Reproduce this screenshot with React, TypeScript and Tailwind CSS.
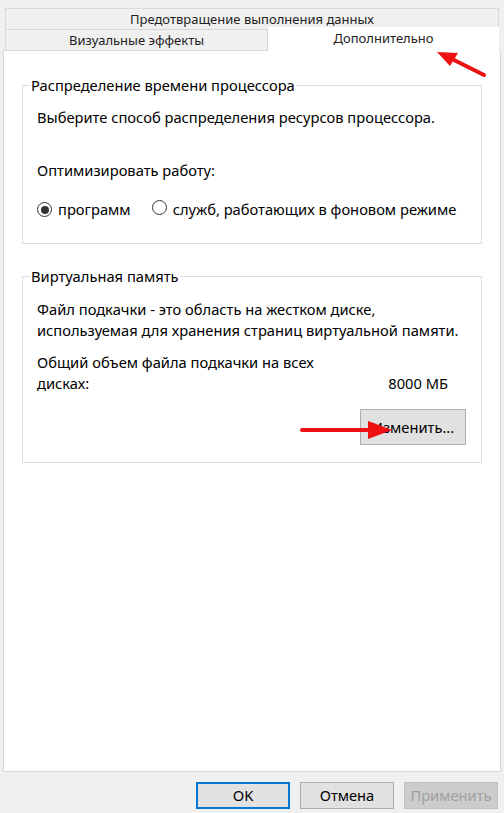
import React from "react";

const font = { fontFamily: '"Noto Sans", "Liberation Sans", sans-serif' };

function Radio({ checked }: { checked?: boolean }) {
  return (
    <span className="relative inline-flex h-[15px] w-[15px] shrink-0 items-center justify-center rounded-full border border-[#333] bg-white">
      {checked && <span className="h-[8px] w-[8px] rounded-full bg-[#333]" />}
    </span>
  );
}

export default function App() {
  return (
    <div
      className="relative flex h-[813px] w-[504px] flex-col bg-[#f0f0f0] text-[14.7px] leading-[21px] text-black"
      style={font}
    >
      {/* Tabs */}
      <div className="flex flex-col pt-[8px]">
        <div className="mx-[5px] flex h-[21px] items-center justify-center border-x border-t border-[#d9d9d9] text-[13px] text-[#222]">
          Предотвращение выполнения данных
        </div>
        <div className="mx-[5px] flex h-[21px] items-end">
          <div className="flex h-[21px] w-[263px] items-center justify-center border-x border-t border-[#d9d9d9] text-[13px] text-[#222]">
            Визуальные эффекты
          </div>
          <div className="relative z-10 -mb-[1px] -mt-[2px] flex h-[24px] flex-1 items-start justify-center bg-white pt-[1px] text-[13px] text-[#222]">
            Дополнительно
          </div>
        </div>
      </div>

      {/* Panel */}
      <div className="mx-[3px] flex h-[722px] flex-col border border-[#d9d9d9] bg-white px-[18px] pt-[24px]">
        <fieldset className="h-[169px] border border-[#dcdcdc] px-[14px] pt-[10px]">
          <legend className="ml-[-7px] px-[1px]">Распределение времени процессора</legend>
          <div className="pt-[1px]">Выберите способ распределения ресурсов процессора.</div>
          <div className="mt-[32px]">Оптимизировать работу:</div>
          <div className="mt-[18px] flex items-center">
            <Radio checked />
            <span className="ml-[6px]">программ</span>
            <span className="ml-[21px]">
              <Radio />
            </span>
            <span className="ml-[6px]">служб, работающих в фоновом режиме</span>
          </div>
        </fieldset>

        <fieldset className="mt-[22px] h-[197px] border border-[#dcdcdc] px-[14px] pt-[12px]">
          <legend className="ml-[-7px] px-[1px]">Виртуальная память</legend>
          <div>Файл подкачки - это область на жестком диске,</div>
          <div className="whitespace-nowrap">используемая для хранения страниц виртуальной памяти.</div>
          <div className="mt-[11px]">Общий объем файла подкачки на всех</div>
          <div className="flex justify-between pr-[19px]">
            <span>дисках:</span>
            <span>8000 МБ</span>
          </div>
          <div className="mt-[15px] flex justify-end pr-[1px]">
            <button className="h-[36px] w-[106px] border border-[#adadad] bg-[#e1e1e1]">
              Изменить...
            </button>
          </div>
        </fieldset>
      </div>

      {/* Bottom buttons */}
      <div className="mt-[10px] flex justify-end gap-[10px] pr-[6px]">
        <button className="h-[27px] w-[94px] border-2 border-[#0078d7] bg-[#e1e1e1]">OK</button>
        <button className="h-[27px] w-[94px] border border-[#adadad] bg-[#e1e1e1]">Отмена</button>
        <button className="h-[27px] w-[94px] border border-[#bfbfbf] bg-[#cccccc] text-[#a0a0a0]">
          Применить
        </button>
      </div>

      {/* Red arrows overlay */}
      <svg className="pointer-events-none absolute left-0 top-0" width="504" height="813">
        <line x1="484" y1="75" x2="452" y2="59" stroke="#ee1111" strokeWidth="4" strokeLinecap="round" />
        <polygon points="437,52 458,53 450,66" fill="#ee1111" />
        <line x1="302" y1="430" x2="370" y2="430" stroke="#ee1111" strokeWidth="4" strokeLinecap="round" />
        <polygon points="392,430 368,421 368,439" fill="#ee1111" />
      </svg>
    </div>
  );
}
